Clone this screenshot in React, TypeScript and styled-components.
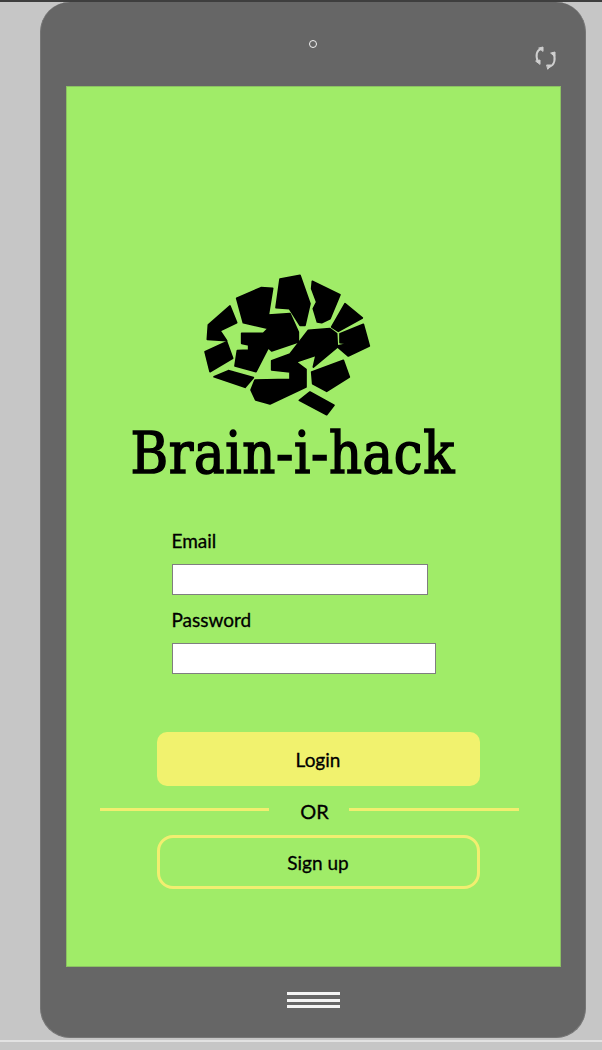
import styled, { createGlobalStyle } from "styled-components";

const GlobalStyle = createGlobalStyle`
	html, body {
		margin: 0;
		padding: 0;
		background: #c6c6c6;
	}
	* {
		box-sizing: border-box;
	}
`;

const Page = styled.div`
	width: 602px;
	height: 1050px;
	overflow: hidden;
	background: #c6c6c6;
	display: flex;
	flex-direction: column;
`;

const TopEdge = styled.div`
	height: 2px;
	flex: none;
	background: #3e3e3e;
`;

const Phone = styled.div`
	width: 546px;
	height: 1036px;
	flex: none;
	margin-left: 40px;
	background: #666666;
	border: 1px solid #767676;
	border-top: none;
	border-radius: 30px;
	display: flex;
	flex-direction: column;
	align-items: center;
`;

const BottomEdge = styled.div`
	height: 2px;
	flex: none;
	margin-top: 2px;
	background: #e2e2e2;
`;

const PhoneHead = styled.div`
	width: 100%;
	height: 84px;
	flex: none;
	display: grid;
	grid-template-columns: 1fr auto 1fr;
`;

const Camera = styled.div`
	grid-column: 2;
	width: 8px;
	height: 8px;
	margin-top: 38px;
	border: 1.5px solid #f2f2f2;
	border-radius: 50%;
`;

const RotateIcon = styled.svg`
	grid-column: 3;
	justify-self: end;
	width: 30px;
	height: 28px;
	margin: 41px 25px 0 0;
`;

const Screen = styled.main`
	width: 495px;
	height: 881px;
	flex: none;
	background: #a0ec68;
	border: 1px solid #8cc263;
	display: flex;
	flex-direction: column;
	padding-top: 178px;
`;

const Brain = styled.svg`
	width: 190px;
	height: 155px;
	flex: none;
	margin-left: 123px;
`;

const Wordmark = styled.h1`
	margin: 1px 0 0 64px;
	height: 63px;
	font: 400 57px/64px "DejaVu Serif Condensed", "DejaVu Serif", serif;
	letter-spacing: 0.65px;
	-webkit-text-stroke: 1.5px #000;
	color: #000;
	white-space: nowrap;
`;

const Form = styled.form`
	display: flex;
	flex-direction: column;
	align-items: flex-start;
	margin: 45px 0 0 105px;
`;

const Label = styled.label`
	font: 400 19px/24px "Lato", sans-serif;
	-webkit-text-stroke: 0.3px #000;
	color: #000;
	height: 24px;
	margin-bottom: 11px;
`;

const Input = styled.input<{ $wide?: boolean }>`
	width: ${({ $wide }) => ($wide ? "264px" : "256px")};
	height: 31px;
	margin-bottom: 13px;
	padding: 0;
	background: #ffffff;
	border: 1px solid #7f7f7f;
	border-radius: 0;
	outline: none;
`;

const Actions = styled.div`
	display: flex;
	flex-direction: column;
	align-items: flex-start;
	margin: 45px 0 0 33px;
`;

const Button = styled.button<{ $outline?: boolean }>`
	width: 323px;
	height: 54px;
	margin-left: 57px;
	padding: 2px 0 0;
	background: ${({ $outline }) => ($outline ? "transparent" : "#f1f26e")};
	border: ${({ $outline }) => ($outline ? "3px solid #f1ee70" : "none")};
	border-radius: ${({ $outline }) => ($outline ? "16px" : "10px")};
	font: 400 19px/24px "Lato", sans-serif;
	-webkit-text-stroke: 0.3px #000;
	color: #000;
`;

const Divider = styled.div`
	width: 419px;
	height: 49px;
	display: flex;
	align-items: flex-start;
`;

const DividerLine = styled.span`
	flex: 1;
	height: 3px;
	margin-top: 22px;
	background: #f1ee70;
`;

const DividerText = styled.span`
	width: 80px;
	flex: none;
	margin-top: 13px;
	padding-left: 11px;
	text-align: center;
	font: 400 20px/24px "Lato", sans-serif;
	-webkit-text-stroke: 0.3px #000;
	color: #000;
`;

const HomeButton = styled.div`
	width: 53px;
	height: 16px;
	flex: none;
	margin-top: 25px;
	display: flex;
	flex-direction: column;
	justify-content: space-between;
`;

const HomeBar = styled.span`
	height: 3px;
	background: #f4f4f4;
`;

const BRAIN_SHAPES = [
	"270,42 330,31 360,116 345,181 330,181 298,131 258,128",
	"367,49 450,89 420,161 395,173 382,171 370,131 380,111 365,71",
	"465,116 517,159 445,199 425,186",
	"520,178 538,243 475,273 440,243 478,236 450,233 450,206",
	"355,196 420,191 440,206 442,246 370,306 378,271 318,291 348,313 348,366 240,417 197,405 183,375 195,345 300,343 300,321 245,315 245,287 300,267",
	"140,100 213,68 248,70 235,150 300,146 325,201 325,231 245,258 235,248 198,320 135,303 142,257 176,255 176,240 155,235 155,205 220,205 235,190 160,173",
	"120,123 140,173 90,197 110,227 52,223 55,180",
	"45,260 110,230 128,280 60,320",
	"115,317 190,338 165,367 72,335",
	"460,286 478,336 410,379 368,356 365,321",
	"360,381 432,421 410,449 328,406",
];

const App = () => (
	<Page>
		<GlobalStyle />
		<TopEdge />
		<Phone>
			<PhoneHead>
				<Camera />
				<RotateIcon viewBox="0 0 30 28" fill="none" stroke="#cfcfcf" strokeWidth="2" strokeLinecap="round">
					<path d="M11 6 C7 7 5 12 8 19" />
					<path d="M23 10 C26 15 25 22 19 24" />
					<path d="M9 5 L13 4 L13 8 Z" fill="#cfcfcf" strokeWidth="1" />
					<path d="M6 18 L10 17 L10 21 Z" fill="#cfcfcf" strokeWidth="1" />
					<path d="M21 10 L25 9 L25 13 Z" fill="#cfcfcf" strokeWidth="1" />
					<path d="M17 22 L21 22 L18 26 Z" fill="#cfcfcf" strokeWidth="1" />
				</RotateIcon>
			</PhoneHead>
			<Screen>
				<Brain viewBox="0 0 570 465" fill="#000" stroke="#000" strokeWidth="5" strokeLinejoin="round">
					{BRAIN_SHAPES.map(points => (
						<polygon key={points} points={points} />
					))}
				</Brain>
				<Wordmark>Brain-i-hack</Wordmark>
				<Form>
					<Label htmlFor="email">Email</Label>
					<Input id="email" type="email" />
					<Label htmlFor="password">Password</Label>
					<Input id="password" type="password" $wide />
				</Form>
				<Actions>
					<Button type="button">Login</Button>
					<Divider>
						<DividerLine />
						<DividerText>OR</DividerText>
						<DividerLine />
					</Divider>
					<Button type="button" $outline>Sign up</Button>
				</Actions>
			</Screen>
			<HomeButton>
				<HomeBar />
				<HomeBar />
				<HomeBar />
			</HomeButton>
		</Phone>
		<BottomEdge />
	</Page>
);

export default App;
